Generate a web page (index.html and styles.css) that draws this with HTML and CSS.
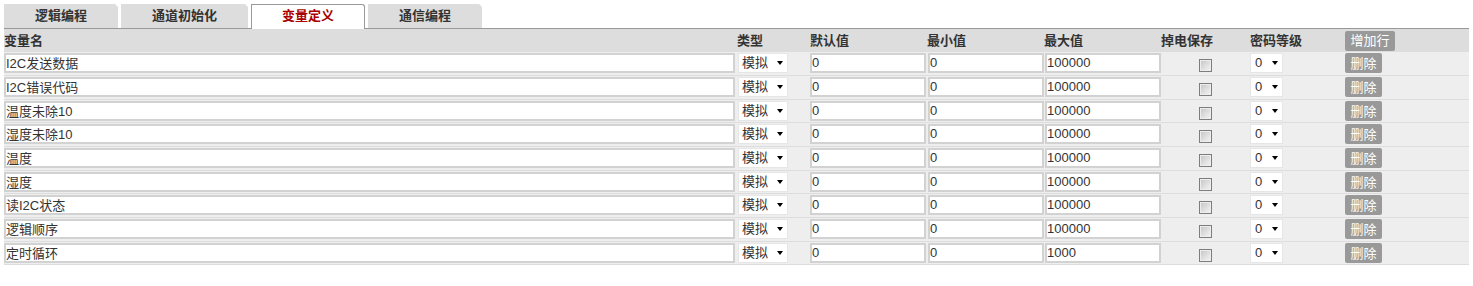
FILE: index.html
```html
<!DOCTYPE html>
<html lang="zh-CN">
<head>
<meta charset="utf-8">
<title>变量定义</title>
<link rel="stylesheet" href="styles.css">
</head>
<body>
<div class="tabs">
  <div class="tab">逻辑编程</div>
  <div class="tab">通道初始化</div>
  <div class="tab tab-active">变量定义</div>
  <div class="tab">通信编程</div>
</div>
<div class="vtable">
  <div class="vrow vhead">
    <div class="cell">变量名</div>
    <div class="cell">类型</div>
    <div class="cell">默认值</div>
    <div class="cell">最小值</div>
    <div class="cell">最大值</div>
    <div class="cell">掉电保存</div>
    <div class="cell">密码等级</div>
    <div class="cell"><button class="btn btn-add">增加行</button></div>
  </div>

  <div class="vrow">
    <div class="cell"><input class="txt txt-name" type="text" value="I2C发送数据"></div>
    <div class="cell"><span class="sel sel-type"><select><option>模拟</option></select></span></div>
    <div class="cell"><input class="txt txt-num" type="text" value="0"></div>
    <div class="cell"><input class="txt txt-num shift" type="text" value="0"></div>
    <div class="cell"><input class="txt txt-num shift" type="text" value="100000"></div>
    <div class="cell cell-center"><input class="chk" type="checkbox"></div>
    <div class="cell"><span class="sel sel-pwd"><select><option>0</option></select></span></div>
    <div class="cell"><button class="btn btn-del">删除</button></div>
  </div>

  <div class="vrow">
    <div class="cell"><input class="txt txt-name" type="text" value="I2C错误代码"></div>
    <div class="cell"><span class="sel sel-type"><select><option>模拟</option></select></span></div>
    <div class="cell"><input class="txt txt-num" type="text" value="0"></div>
    <div class="cell"><input class="txt txt-num shift" type="text" value="0"></div>
    <div class="cell"><input class="txt txt-num shift" type="text" value="100000"></div>
    <div class="cell cell-center"><input class="chk" type="checkbox"></div>
    <div class="cell"><span class="sel sel-pwd"><select><option>0</option></select></span></div>
    <div class="cell"><button class="btn btn-del">删除</button></div>
  </div>

  <div class="vrow">
    <div class="cell"><input class="txt txt-name" type="text" value="温度未除10"></div>
    <div class="cell"><span class="sel sel-type"><select><option>模拟</option></select></span></div>
    <div class="cell"><input class="txt txt-num" type="text" value="0"></div>
    <div class="cell"><input class="txt txt-num shift" type="text" value="0"></div>
    <div class="cell"><input class="txt txt-num shift" type="text" value="100000"></div>
    <div class="cell cell-center"><input class="chk" type="checkbox"></div>
    <div class="cell"><span class="sel sel-pwd"><select><option>0</option></select></span></div>
    <div class="cell"><button class="btn btn-del">删除</button></div>
  </div>

  <div class="vrow">
    <div class="cell"><input class="txt txt-name" type="text" value="湿度未除10"></div>
    <div class="cell"><span class="sel sel-type"><select><option>模拟</option></select></span></div>
    <div class="cell"><input class="txt txt-num" type="text" value="0"></div>
    <div class="cell"><input class="txt txt-num shift" type="text" value="0"></div>
    <div class="cell"><input class="txt txt-num shift" type="text" value="100000"></div>
    <div class="cell cell-center"><input class="chk" type="checkbox"></div>
    <div class="cell"><span class="sel sel-pwd"><select><option>0</option></select></span></div>
    <div class="cell"><button class="btn btn-del">删除</button></div>
  </div>

  <div class="vrow">
    <div class="cell"><input class="txt txt-name" type="text" value="温度"></div>
    <div class="cell"><span class="sel sel-type"><select><option>模拟</option></select></span></div>
    <div class="cell"><input class="txt txt-num" type="text" value="0"></div>
    <div class="cell"><input class="txt txt-num shift" type="text" value="0"></div>
    <div class="cell"><input class="txt txt-num shift" type="text" value="100000"></div>
    <div class="cell cell-center"><input class="chk" type="checkbox"></div>
    <div class="cell"><span class="sel sel-pwd"><select><option>0</option></select></span></div>
    <div class="cell"><button class="btn btn-del">删除</button></div>
  </div>

  <div class="vrow">
    <div class="cell"><input class="txt txt-name" type="text" value="湿度"></div>
    <div class="cell"><span class="sel sel-type"><select><option>模拟</option></select></span></div>
    <div class="cell"><input class="txt txt-num" type="text" value="0"></div>
    <div class="cell"><input class="txt txt-num shift" type="text" value="0"></div>
    <div class="cell"><input class="txt txt-num shift" type="text" value="100000"></div>
    <div class="cell cell-center"><input class="chk" type="checkbox"></div>
    <div class="cell"><span class="sel sel-pwd"><select><option>0</option></select></span></div>
    <div class="cell"><button class="btn btn-del">删除</button></div>
  </div>

  <div class="vrow">
    <div class="cell"><input class="txt txt-name" type="text" value="读I2C状态"></div>
    <div class="cell"><span class="sel sel-type"><select><option>模拟</option></select></span></div>
    <div class="cell"><input class="txt txt-num" type="text" value="0"></div>
    <div class="cell"><input class="txt txt-num shift" type="text" value="0"></div>
    <div class="cell"><input class="txt txt-num shift" type="text" value="100000"></div>
    <div class="cell cell-center"><input class="chk" type="checkbox"></div>
    <div class="cell"><span class="sel sel-pwd"><select><option>0</option></select></span></div>
    <div class="cell"><button class="btn btn-del">删除</button></div>
  </div>

  <div class="vrow">
    <div class="cell"><input class="txt txt-name" type="text" value="逻辑顺序"></div>
    <div class="cell"><span class="sel sel-type"><select><option>模拟</option></select></span></div>
    <div class="cell"><input class="txt txt-num" type="text" value="0"></div>
    <div class="cell"><input class="txt txt-num shift" type="text" value="0"></div>
    <div class="cell"><input class="txt txt-num shift" type="text" value="100000"></div>
    <div class="cell cell-center"><input class="chk" type="checkbox"></div>
    <div class="cell"><span class="sel sel-pwd"><select><option>0</option></select></span></div>
    <div class="cell"><button class="btn btn-del">删除</button></div>
  </div>

  <div class="vrow">
    <div class="cell"><input class="txt txt-name" type="text" value="定时循环"></div>
    <div class="cell"><span class="sel sel-type"><select><option>模拟</option></select></span></div>
    <div class="cell"><input class="txt txt-num" type="text" value="0"></div>
    <div class="cell"><input class="txt txt-num shift" type="text" value="0"></div>
    <div class="cell"><input class="txt txt-num shift" type="text" value="1000"></div>
    <div class="cell cell-center"><input class="chk" type="checkbox"></div>
    <div class="cell"><span class="sel sel-pwd"><select><option>0</option></select></span></div>
    <div class="cell"><button class="btn btn-del">删除</button></div>
  </div>
</div>
</body>
</html>
```

FILE: styles.css
```css
* { box-sizing: border-box; }

html, body {
  margin: 0;
  background: #fff;
}

body {
  padding: 4px;
  font-family: "Liberation Sans", "Noto Sans CJK SC", sans-serif;
  font-size: 13px;
  color: #333;
}

/* ---------- tabs ---------- */
.tabs {
  display: flex;
  align-items: flex-end;
  gap: 3px;
  height: 25px;
  border-bottom: 1px solid #999;
}

.tab {
  height: 24px;
  line-height: 23px;
  padding: 0 31px;
  background: #ddd;
  font-weight: bold;
  color: #333;
  white-space: nowrap;
  clip-path: polygon(0 0, calc(100% - 3px) 0, 100% 3px, 100% 100%, 0 100%);
}

.tab-active {
  height: 25px;
  margin-bottom: -1px;
  line-height: 22px;
  padding: 0 30px;
  background: #fff;
  border: 1px solid #999;
  border-bottom: none;
  border-top-right-radius: 3px;
  color: #a00;
  clip-path: none;
}

/* ---------- table ---------- */
.vtable {
  width: 100%;
}

.vrow {
  display: grid;
  grid-template-columns: 733px 73px 117px 117px 117px 89px 95px 1fr;
  height: 24px;
  padding-top: 1px;
  align-items: start;
  background: #eee;
  border-bottom: 1px solid #ddd;
}

.vrow:nth-child(3n+1) {
  height: 23px;
}

.vhead {
  height: 22px;
  padding-top: 0;
  align-items: center;
  background: #ddd;
  border-bottom: none;
  font-weight: bold;
  color: #333;
}

.vhead .cell {
  line-height: 21px;
}

.cell {
  display: flex;
  min-width: 0;
  white-space: nowrap;
}

.cell-center {
  justify-content: center;
}

/* ---------- inputs ---------- */
.txt {
  height: 20px;
  margin: 0;
  padding: 0 0 1px 0;
  border: 2px solid #d2d2d2;
  background: #fff;
  font-family: inherit;
  font-size: 13px;
  color: #333;
  outline: none;
}

.txt-name { width: 731px; }
.txt-num  { width: 116px; }
.shift    { margin-left: 1px; }

.sel {
  position: relative;
  display: block;
  height: 20px;
}

.sel select {
  display: block;
  width: 100%;
  height: 20px;
  margin: 0;
  padding: 0 0 1px 3px;
  border: 1px solid #e6e6e6;
  border-radius: 0;
  background: #fff;
  font-family: inherit;
  font-size: 13px;
  color: #333;
  -webkit-appearance: none;
  appearance: none;
  outline: none;
}

.sel::after {
  content: "";
  position: absolute;
  right: 5px;
  top: 8px;
  width: 0;
  height: 0;
  border-left: 3.5px solid transparent;
  border-right: 3.5px solid transparent;
  border-top: 4px solid #000;
  pointer-events: none;
}

.sel-type { width: 50px; margin-left: 1px; }
.sel-pwd  { width: 33px; }
.sel-pwd select { padding-left: 4px; }

.chk {
  -webkit-appearance: none;
  appearance: none;
  width: 13px;
  height: 13px;
  margin: 6px 0 0 0;
  border: 1px solid #7d7d7d;
  background: linear-gradient(135deg, #c4c4c4 0%, #f6f6f6 100%);
  box-shadow: inset 0 0 0 1px #ededed;
}

/* ---------- buttons ---------- */
.btn {
  height: 20px;
  margin: 0;
  padding: 0;
  border: none;
  border-radius: 2px;
  background: #999;
  color: #fff;
  font-family: inherit;
  font-size: 13px;
  line-height: 19px;
  text-align: center;
  cursor: pointer;
}

.btn-add { width: 50px; }
.btn-del { width: 37px; }
```
